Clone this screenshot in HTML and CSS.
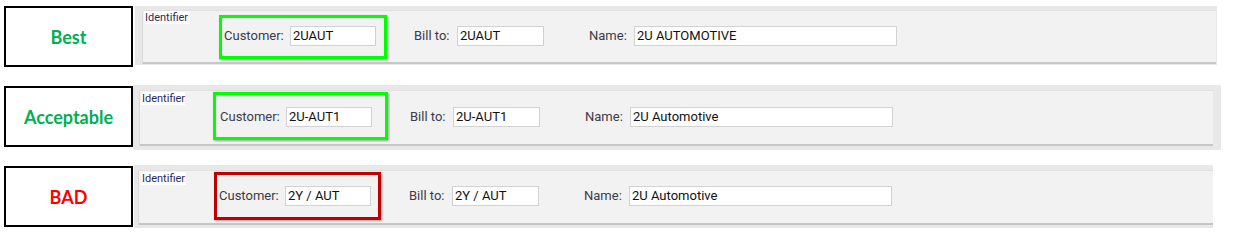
FILE: index.html
```html
<!DOCTYPE html>
<html>
<head>
<meta charset="utf-8">
<link rel="stylesheet" href="styles.css">
</head>
<body>
<div class="page">
  <div class="row row1">
    <div class="grade good">Best</div>
    <div class="panel">
      <div class="inner">
        <div class="ident">Identifier</div>
        <div class="hl green">
          <span class="lbl lbl-cust">Customer:</span>
          <span class="box box-cust">2UAUT</span>
        </div>
        <span class="lbl lbl-bill">Bill to:</span>
        <span class="box box-bill">2UAUT</span>
        <span class="lbl lbl-name">Name:</span>
        <span class="box box-name">2U AUTOMOTIVE</span>
      </div>
    </div>
  </div>
  <div class="row row2">
    <div class="grade good">Acceptable</div>
    <div class="panel">
      <div class="inner">
        <div class="ident">Identifier</div>
        <div class="hl green">
          <span class="lbl lbl-cust">Customer:</span>
          <span class="box box-cust">2U-AUT1</span>
        </div>
        <span class="lbl lbl-bill">Bill to:</span>
        <span class="box box-bill">2U-AUT1</span>
        <span class="lbl lbl-name">Name:</span>
        <span class="box box-name">2U Automotive</span>
      </div>
    </div>
  </div>
  <div class="row row3">
    <div class="grade bad">BAD</div>
    <div class="panel">
      <div class="inner">
        <div class="ident">Identifier</div>
        <div class="hl red">
          <span class="lbl lbl-cust">Customer:</span>
          <span class="box box-cust">2Y / AUT</span>
        </div>
        <span class="lbl lbl-bill">Bill to:</span>
        <span class="box box-bill">2Y / AUT</span>
        <span class="lbl lbl-name">Name:</span>
        <span class="box box-name">2U Automotive</span>
      </div>
    </div>
  </div>
</div>
</body>
</html>
```

FILE: styles.css
```css
html, body {
  margin: 0;
  padding: 0;
  background: #ffffff;
}

.page {
  padding: 6px 0 0 4px;
  display: flex;
  flex-direction: column;
  font-family: Roboto, "Liberation Sans", sans-serif;
}

.row {
  display: flex;
  align-items: flex-start;
  height: 80px;
}

.grade {
  box-sizing: border-box;
  width: 129px;
  height: 61px;
  border: 2px solid #000;
  background: #fff;
  display: flex;
  align-items: center;
  justify-content: center;
  font-family: Lato, "Open Sans", sans-serif;
  font-weight: 700;
  font-size: 18px;
}

.grade.good { color: #00b050; }
.grade.bad { color: #ff0000; }

.panel {
  box-sizing: border-box;
  background: #e8e8e8;
  display: flex;
}

.inner {
  flex: 1;
  background: #f2f2f2;
  border-bottom: 2px solid #c6c6c6;
  box-shadow: -1px 0 0 #dadada, 0 -1px 0 #e0e0e0;
  display: flex;
  align-items: flex-start;
}

.ident {
  box-sizing: border-box;
  flex: none;
  background: #fff;
  color: #2e2a55;
  font-size: 11px;
  line-height: 13px;
  padding: 0 0 0 1px;
  white-space: nowrap;
}

.hl {
  display: flex;
  align-items: center;
  border: 3px solid;
  box-shadow: 1px 1px 2px rgba(0, 0, 0, 0.35);
}

.hl.green { border-color: #00ff00; }
.hl.red { border-color: #c00000; }

.lbl {
  font-size: 13px;
  color: #3a3a4a;
  line-height: 20px;
  white-space: nowrap;
}

.lbl-cust { width: 66px; }
.lbl-bill { width: 43px; }
.lbl-name { width: 45px; margin-left: 45px; }

.box {
  box-sizing: border-box;
  height: 20px;
  background: #fff;
  border: 1px solid #d2d2d2;
  font-size: 13px;
  line-height: 18px;
  color: #111;
  padding-left: 2px;
  white-space: nowrap;
}

.box-cust { width: 86px; }
.box-bill { width: 87px; }
.box-name { width: 263px; }

/* row 1 */
.row1 .panel {
  margin-left: 2px;
  width: 1082px;
  height: 59px;
  padding: 5px 1px 1px 8px;
}
.row1 .ident { width: 46px; margin-left: 1px; }
.row1 .hl {
  margin: 4px 0 0 29px;
  padding: 8px 8px 10px 2px;
}
.row1 .lbl-bill { margin-left: 27px; }
.row1 .lbl-bill, .row1 .box-bill, .row1 .lbl-name, .row1 .box-name { margin-top: 15px; }

/* row 2 */
.row2 .panel {
  margin-top: -1px;
  width: 1088px;
  height: 65px;
  padding: 6px 8px 4px 7px;
}
.row2 .ident { width: 44px; margin: 1px 0 0 1px; }
.row2 .hl {
  margin: 1px 0 0 28px;
  padding: 12px 13px 10px 4px;
}
.row2 .lbl-bill { margin-left: 22px; }
.row2 .lbl-bill, .row2 .box-bill, .row2 .lbl-name, .row2 .box-name { margin-top: 16px; }

/* row 3 */
.row3 .panel {
  margin-top: -1px;
  margin-left: 1px;
  width: 1079px;
  height: 63px;
  padding: 6px 0 3px 5px;
}
.row3 .ident { width: 45px; margin: 1px 0 0 2px; }
.row3 .hl {
  margin: 1px 0 0 28px;
  padding: 11px 7px 11px 2px;
}
.row3 .lbl-bill { margin-left: 28px; }
.row3 .lbl-bill, .row3 .box-bill, .row3 .lbl-name, .row3 .box-name { margin-top: 15px; }
```
